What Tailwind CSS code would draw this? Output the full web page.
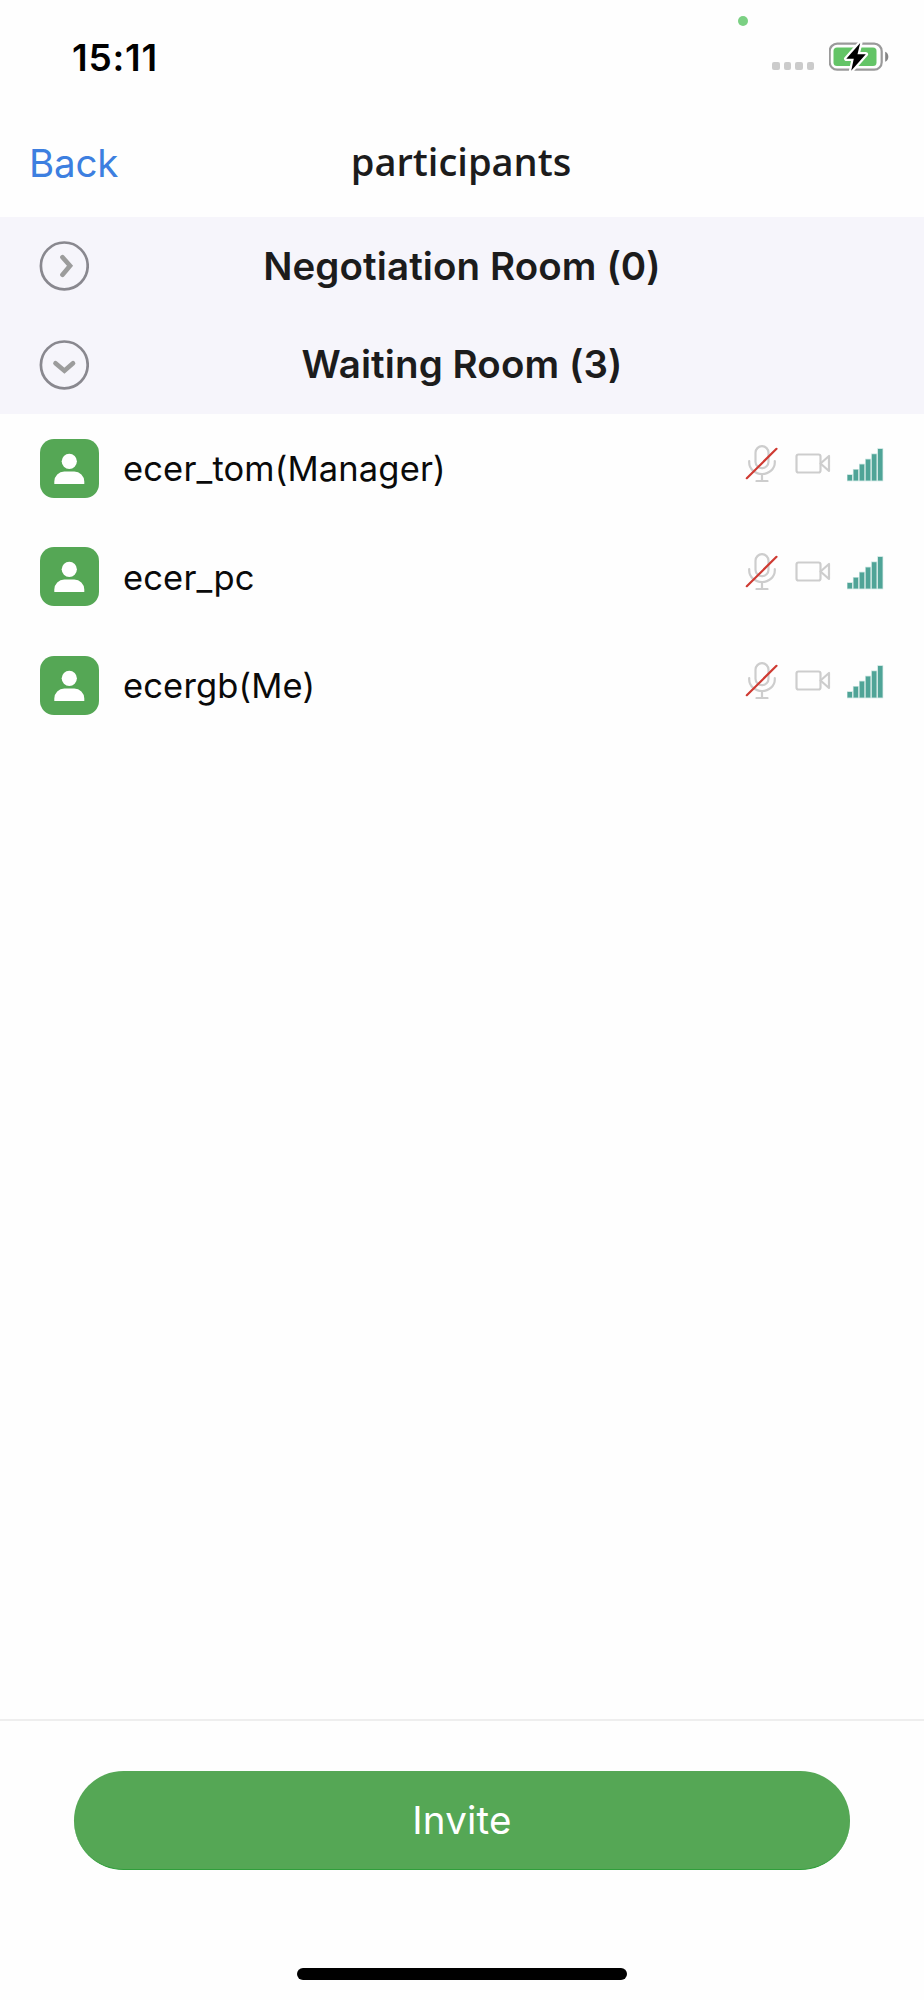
<!DOCTYPE html>
<html lang="en">
<head>
  <meta charset="UTF-8">
  <title>participants</title>
  <meta name="viewport" content="width=device-width,initial-scale=1.0">
  <script src="https://cdn.jsdelivr.net/npm/@tailwindcss/browser@4"></script>
</head>
<body class="bg-[#fefefe]">
  <div class="w-[924px] h-[2000px] flex flex-col overflow-hidden font-['Inter','Liberation_Sans',sans-serif] text-[#1c1c1c]">
    <!-- Status bar -->
    <div class="relative h-[114px] shrink-0 flex items-center justify-between pl-[72px] pr-[34px] text-black">
      <span class="text-[37px] leading-none font-semibold tracking-[0.8px]">15:11</span>
      <div class="flex items-center gap-[15px]">
        <div class="flex gap-1 pt-[18px]">
          <i class="size-[7.5px] rounded-[2px] bg-[#cbcbcb]"></i>
          <i class="size-[7.5px] rounded-[2px] bg-[#cbcbcb]"></i>
          <i class="size-[7.5px] rounded-[2px] bg-[#cbcbcb]"></i>
          <i class="size-[7.5px] rounded-[2px] bg-[#cbcbcb]"></i>
        </div>
        <svg class="w-[61px] h-[30px]" viewBox="0 0 61 30">
          <rect x="0.7" y="1.7" width="52" height="26" rx="7.5" fill="none" stroke="#9a9a9a" stroke-width="2.2"/>
          <rect x="4.5" y="5.5" width="43" height="18.5" rx="3.5" fill="#63c466"/>
          <path d="M56.2 9.7c4.2 1.6 4.2 8.4 0 10z" fill="#858585"/>
          <path d="M31.2 1L17.3 16.8h7.5L22.2 28.8L36.8 12.3h-8.3z" fill="#000" stroke="#fefefe" stroke-width="4.5" stroke-linejoin="round" paint-order="stroke"/>
        </svg>
      </div>
      <i class="absolute left-[738px] top-[16px] size-[10px] rounded-full bg-[#7bd083]"></i>
    </div>
    <!-- Nav bar -->
    <div class="h-[103px] shrink-0 grid grid-cols-[1fr_auto_1fr] items-center px-[29px] pb-[6px]">
      <span class="pt-px text-[38.5px] leading-none text-[#3d7fe0] tracking-[-0.2px]">Back</span>
      <h1 class="-ml-[2px] pb-[3px] font-['Open_Sans','Noto_Sans',sans-serif] text-[38px] leading-none font-semibold">participants</h1>
    </div>
    <!-- Rooms -->
    <div class="h-[197px] shrink-0 bg-[#f6f5fb] flex flex-col">
      <div class="flex-1 grid grid-cols-[50px_1fr_50px] items-center px-[39px]">
        <svg class="size-[50px]" viewBox="0 0 50 50" fill="none">
          <circle cx="25.3" cy="24.9" r="23.4" stroke="#89888f" stroke-width="2.7"/>
          <path d="M23.5 16.2l7.5 8.6-7.5 8.9" stroke="#9c9c9c" stroke-width="4.7" stroke-linecap="round"/>
        </svg>
        <h2 class="text-center text-[38.5px] leading-none font-semibold tracking-[0.1px]">Negotiation Room (0)</h2>
      </div>
      <div class="flex-1 grid grid-cols-[50px_1fr_50px] items-center px-[39px]">
        <svg class="size-[50px]" viewBox="0 0 50 50" fill="none">
          <circle cx="25.3" cy="24.9" r="23.4" stroke="#89888f" stroke-width="2.7"/>
          <path d="M16.5 23.2l8.9 7.5 8.6-7.5" stroke="#9c9c9c" stroke-width="4.7" stroke-linecap="round"/>
        </svg>
        <h2 class="pb-px text-center text-[38.5px] leading-none font-semibold tracking-[0.1px]">Waiting Room (3)</h2>
      </div>
    </div>
    <!-- People -->
    <ul id="people" class="flex-1"></ul>
    <!-- Footer -->
    <div class="h-[281px] shrink-0 border-t-[2px] border-[#eeeeee] flex flex-col items-center justify-between pt-[50px] pb-[20px]">
      <button class="w-[776px] h-[99px] rounded-full bg-[#55a755] border-b border-[#2f9e3a] text-white text-[38.5px] leading-none tracking-[0.2px]">Invite</button>
      <div class="w-[330px] h-[12px] rounded-full bg-black"></div>
    </div>
  </div>
  <script>
    const people = ['ecer_tom(Manager)', 'ecer_pc', 'ecergb(Me)'];
    document.getElementById('people').innerHTML = people.map(name => `
      <li class="h-[108.5px] flex items-center px-[40px]">
        <svg class="size-[59px] shrink-0" viewBox="0 0 59 59">
          <rect width="59" height="59" rx="14" fill="#55a755"/>
          <circle cx="29.3" cy="22.3" r="7.6" fill="#fff"/>
          <path d="M14.3 45v-2.5a10 10 0 0 1 10-10h10a10 10 0 0 1 10 10V45z" fill="#fff"/>
        </svg>
        <span class="flex-1 pl-[24px] pt-[2px] text-[34.5px] leading-none tracking-[0.15px] text-[#0a0a0a]">${name}</span>
        <div class="flex items-center gap-[16px] pb-[11px]">
          <svg class="w-[34.5px] h-[38px]" viewBox="0 0 34.5 38" fill="none" stroke="#cdcdcd" stroke-width="2.2" stroke-linecap="round">
            <rect x="10.5" y="2.2" width="13" height="22" rx="6.5"/>
            <path d="M4.2 17v1.5a12.8 11.5 0 0 0 25.6 0V17M17 30v7M11.5 37h11"/>
            <path d="M1.8 34.2L31.5 4.8" stroke="#cf3b33"/>
          </svg>
          <svg class="w-[36px] h-[38px]" viewBox="0 0 36 38" fill="none" stroke="#cdcdcd" stroke-width="2.2" stroke-linejoin="round">
            <rect x="1.5" y="10.5" width="24" height="18" rx="2"/>
            <path d="M25.5 19.5l8.5-7.5v15z"/>
          </svg>
          <svg class="w-[37px] h-[38px]" viewBox="0 0 37 38">
            <path d="M.5 31h4.5v5.5H.5zM6.6 25.7h4.5v10.8H6.6zM12.7 20.5h4.5v16h-4.5zM18.8 15.5h4.5v21h-4.5zM24.900 10.3h4.5v26.2h-4.5zM31 5h4.5v31.5H31z" fill="#4fa497" stroke="#c4e2dd" stroke-width="1.4" paint-order="stroke"/>
          </svg>
        </div>
      </li>`).join('');
  </script>
</body>
</html>
